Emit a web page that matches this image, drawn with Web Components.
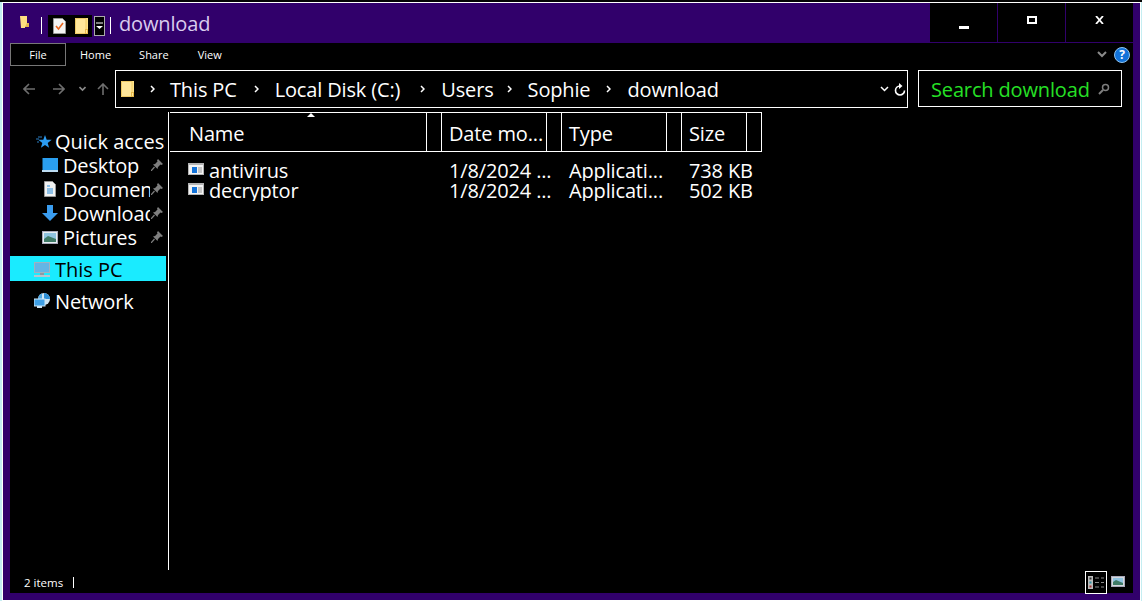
<!DOCTYPE html>
<html>
<head>
<meta charset="utf-8">
<title>download</title>
<style>
    html, body { margin: 0; height: 100%; overflow: hidden; }
    body {
        background: linear-gradient(#050505 2px, #c4eef2 2px);
        font-family: "Open Sans", "Noto Sans", sans-serif;
        letter-spacing: -0.15px;
        color: #fff;
    }
</style>
</head>
<body>
<explorer-window>
    <title-bar slot="title">download</title-bar>
    <ribbon-tabs slot="ribbon"></ribbon-tabs>
    <address-row slot="address"></address-row>
    <nav-pane slot="nav">
        <nav-item icon="star" left="26" gap="3" style="letter-spacing:0;padding-right:1px">Quick access</nav-item>
        <nav-item icon="desktop" left="32" gap="5" pin>Desktop</nav-item>
        <nav-item icon="docs" left="32" gap="5" pin>Documents</nav-item>
        <nav-item icon="down" left="32" gap="5" pin>Downloads</nav-item>
        <nav-item icon="pics" left="32" gap="5" pin>Pictures</nav-item>
        <nav-item icon="pc" left="24" gap="5" selected style="letter-spacing:0">This PC</nav-item>
        <nav-item icon="net" left="24" gap="5" style="margin-top:9px">Network</nav-item>
    </nav-pane>
    <file-list slot="files">
        <file-row date="1/8/2024 ..." type="Applicati..." size="738 KB">antivirus</file-row>
        <file-row date="1/8/2024 ..." type="Applicati..." size="502 KB">decryptor</file-row>
    </file-list>
    <status-bar slot="status">2 items</status-bar>
</explorer-window>

<script>
    // inline svg for every icon
    const ICONS = {
        folder: '<svg width="13" height="16" viewBox="0 0 13 16"><rect width="13" height="16" fill="#ffe38a"/><path d="M.5.5h10.500v15H.5z" fill="#ffe79b" stroke="#eec964"/><path d="M10 11h3v5h-3z" fill="#e8b94a"/><path d="M11 12h1v3h-1z" fill="#ffe79b"/></svg>',
        check: '<svg width="13" height="16" viewBox="0 0 13 16"><path d="M.5.5h9l3 3v12H.5z" fill="#f4f4f4" stroke="#9a9a9a"/><path d="M3 8l2.500 3L10 5" fill="none" stroke="#e8651f" stroke-width="1.600"/></svg>',
        star: '<svg width="16" height="15" viewBox="0 0 16 15"><path d="M9 1l1.700 4.700 5 .1-4 3.200 1.400 4.700L9 11l-4.100 2.700L6.300 9l-4-3.200 5-.1z" fill="#2b9cf2"/><path d="M2 3h4M0 5h3M1 8h2" stroke="#2b7cc0"/></svg>',
        desktop: '<svg width="16" height="14" viewBox="0 0 16 14"><rect x=".5" y="0" width="15.500" height="12" fill="#2a9ff0"/><rect x="0" y="12" width="16" height="2" fill="#bcdcf2"/></svg>',
        docs: '<svg width="12" height="16" viewBox="0 0 12 16"><path d="M.5.5h8l3 3v12H.5z" fill="#f2f2f2" stroke="#999"/><path d="M3 5h3M3 8h6M3 10h6M3 12h6" stroke="#2a8fdd"/></svg>',
        down: '<svg width="16" height="16" viewBox="0 0 16 16"><path d="M5 0h6v8h5l-8 8-8-8h5z" fill="#3a9df0"/></svg>',
        pics: '<svg width="16" height="13" viewBox="0 0 16 13"><rect x=".5" y=".5" width="15" height="12" fill="#e8eef2" stroke="#aab"/><rect x="2" y="2" width="12" height="9" fill="#8fc3e0"/><path d="M2 8l4-3 8 3v3H2z" fill="#3f7a66"/></svg>',
        pc: '<svg width="16" height="15" viewBox="0 0 16 15"><rect x=".5" y=".5" width="15" height="10" fill="#63b6e6" stroke="#9fb2c0"/><rect x="6" y="11" width="4" height="2" fill="#8a9aa5"/><rect x="0" y="13" width="16" height="2" fill="#b5c6d0"/></svg>',
        net: '<svg width="16" height="16" viewBox="0 0 16 16"><circle cx="10" cy="6" r="6" fill="#cfe6f5"/><path d="M10 0a6 6 0 0 1 6 6h-6z" fill="#2f8fd6"/><path d="M4 6a6 6 0 0 1 4-5.600V6z" fill="#52a8e2"/><rect x="0" y="6" width="11" height="7" fill="#3fa0e6" stroke="#cfe6f5"/><rect x="3" y="13" width="5" height="2" fill="#cfe6f5"/></svg>',
        pin: '<svg width="12" height="12" viewBox="0 0 12 12"><path d="M7 0l5 5-1.500 1-1-.5L7 8l-.5 2L2 5.500 4 5l2.500-2.500-.5-1z" fill="#7e7e7e"/><path d="M3.500 8L0 12" stroke="#7e7e7e" stroke-width="1.200"/></svg>',
        app: '<svg width="16" height="12" viewBox="0 0 16 12"><rect width="16" height="12" fill="#b4b4b4"/><rect x="1" y="2" width="14" height="9" fill="#f4f4f4"/><rect x="4" y="4" width="5" height="6" fill="#1272d8"/><path d="M10 5h4M10 7h4M10 9h4" stroke="#999"/></svg>',
        chev: '<svg width="5" height="8" viewBox="0 0 5 8"><path d="M1 1l3 3-3 3" fill="none" stroke="#fff" stroke-width="1.500"/></svg>',
    };

    class ExplorerWindow extends HTMLElement {
        constructor() {
            super();
            this.attachShadow({ mode: 'open' }).innerHTML = `
                <style>
                    :host {
                        display: flex; flex-direction: column; box-sizing: border-box;
                        width: 1139px; height: 599px; margin: 2px 0 0 2px;
                        border: 1px solid #fff; background: #31006b;
                    }
                    .body { flex: 1; margin: 0 7px 7px; background: #000; display: flex; flex-direction: column; min-height: 0; }
                    .main { flex: 1; display: flex; min-height: 0; }
                </style>
                <slot name="title"></slot>
                <div class="body">
                    <slot name="ribbon"></slot>
                    <slot name="address"></slot>
                    <div class="main">
                        <slot name="nav"></slot>
                        <slot name="files"></slot>
                    </div>
                    <slot name="status"></slot>
                </div>`;
        }
    }

    class TitleBar extends HTMLElement {
        constructor() {
            super();
            this.attachShadow({ mode: 'open' }).innerHTML = `
                <style>
                    :host { display: flex; height: 40px; padding-left: 17px; padding-right: 7px; align-items: flex-start; flex: none; }
                    .app { margin: 13px 0 0 0; width: 9px; height: 12px; }
                    .sep { width: 1px; height: 17px; background: #fff; margin-top: 14px; }
                    .quick { display: flex; gap: 9px; background: #000; height: 22px; width: 44px; box-sizing: border-box; padding: 3px 0 0 5px; margin: 12px 0 0 6px; }
                    .drop { box-sizing: border-box; width: 11px; height: 20px; margin: 13px 0 0 2px; border: 1px solid #aaa; background: #000; display: flex; align-items: center; justify-content: center; }
                    .name { margin: 6px 0 0 8px; font-size: 20px; line-height: 30px; color: #d9ccee; flex: 1; white-space: nowrap; }
                    .btns { display: flex; gap: 1px; height: 39px; background: #31006b; }
                    .btn { width: 67px; background: #000; display: flex; align-items: center; justify-content: center; }
                </style>
                <svg class="app" viewBox="0 0 9 12"><path d="M0 0h7v7h2v4H5v1H1z" fill="#ffdf80"/><path d="M7 7h2v4H5z" fill="#e3b64c"/></svg>
                <div class="sep" style="margin-left:12px"></div>
                <div class="quick">${ICONS.check}${ICONS.folder}</div>
                <div class="drop"><svg width="7" height="9" viewBox="0 0 7 9"><path d="M0 1h7" stroke="#fff"/><path d="M0 4h7L3.500 7z" fill="#fff"/></svg></div>
                <div class="sep" style="margin-left:5px"></div>
                <div class="name"><slot></slot></div>
                <div class="btns">
                    <div class="btn"><svg width="10" height="3" style="margin-top:9px"><rect width="10" height="3" fill="#fff"/></svg></div>
                    <div class="btn"><svg width="10" height="8" style="margin-top:-6px"><rect x="1" y="1" width="8" height="6" fill="none" stroke="#fff" stroke-width="2"/></svg></div>
                    <div class="btn"><svg width="9" height="8" style="margin-top:-6px" viewBox="0 0 9 8"><path d="M1 0l7 8M8 0L1 8" stroke="#fff" stroke-width="1.800"/></svg></div>
                </div>`;
        }
    }

    class RibbonTabs extends HTMLElement {
        constructor() {
            super();
            this.attachShadow({ mode: 'open' }).innerHTML = `
                <style>
                    :host { display: flex; height: 23px; align-items: stretch; font-size: 11px; flex: none; letter-spacing: 0; }
                    .tab { display: flex; align-items: center; justify-content: center; }
                    .file { width: 56px; box-sizing: border-box; border: 1px solid #777; }
                    .right { margin-left: auto; display: flex; align-items: center; gap: 7px; padding-right: 3px; }
                    .help { width: 16px; height: 16px; border-radius: 50%; background: #1272d8; border: 1px solid #8fc4ef; box-sizing: border-box; font: bold 12px "Open Sans", sans-serif; text-align: center; line-height: 14px; }
                </style>
                <div class="tab file">File</div>
                <div class="tab" style="margin-left:14px">Home</div>
                <div class="tab" style="margin-left:28px">Share</div>
                <div class="tab" style="margin-left:29px">View</div>
                <div class="right">
                    <svg width="10" height="7" viewBox="0 0 10 7"><path d="M1 1l4 4 4-4" fill="none" stroke="#8a8a8a" stroke-width="2"/></svg>
                    <div class="help">?</div>
                </div>`;
        }
    }

    class AddressRow extends HTMLElement {
        constructor() {
            super();
            // second value nudges the gap after the crumb, the widths differ a bit from the real font
            const crumbs = [['This PC', 1], ['Local Disk (C:)', 4], ['Users', -3], ['Sophie', 0], ['download', 0]];
            this.attachShadow({ mode: 'open' }).innerHTML = `
                <style>
                    :host { display: flex; height: 46px; box-sizing: border-box; padding-top: 4px; align-items: flex-start; flex: none; font-size: 20px; }
                    .arrows { width: 105px; height: 38px; display: flex; align-items: center; flex: none; }
                    .box { box-sizing: border-box; border: 1px solid #fff; height: 38px; display: flex; align-items: center; }
                    .addr { width: 793px; padding-left: 5px; flex: none; }
                    .crumb { white-space: nowrap; line-height: 36px; padding-top: 2px; }
                    .chev { margin: 0 16px; display: flex; }
                    .first { margin-right: 15px; }
                    .tail { margin-left: auto; display: flex; align-items: center; gap: 5px; padding-right: 1px; }
                    .search { width: 204px; height: 37px; margin-left: 10px; color: #26e026; padding-left: 12px; flex: none; }
                    .search span { flex: 1; white-space: nowrap; padding-top: 2px; }
                    .search svg { margin-right: 11px; }
                </style>
                <div class="arrows">
                    <svg style="margin-left:13px" width="12" height="12" viewBox="0 0 12 12"><path d="M6 1L1 6l5 5M1 6h11" fill="none" stroke="#6e6e6e" stroke-width="1.600"/></svg>
                    <svg style="margin-left:18px" width="12" height="12" viewBox="0 0 12 12"><path d="M6 1l5 5-5 5M11 6H0" fill="none" stroke="#6e6e6e" stroke-width="1.600"/></svg>
                    <svg style="margin-left:14px" width="7" height="6" viewBox="0 0 7 6"><path d="M.5 1l3 3 3-3" fill="none" stroke="#8a8a8a" stroke-width="1.600"/></svg>
                    <svg style="margin-left:11px" width="12" height="12" viewBox="0 0 12 12"><path d="M1 6l5-5 5 5M6 1v11" fill="none" stroke="#6e6e6e" stroke-width="1.600"/></svg>
                </div>
                <div class="box addr">
                    ${ICONS.folder}
                    <span class="chev first">${ICONS.chev}</span>
                    ${crumbs.map(c => `<span class="crumb" style="margin-right:${c[1]}px">${c[0]}</span>`).join(`<span class="chev">${ICONS.chev}</span>`)}
                    <div class="tail">
                        <svg width="9" height="6" viewBox="0 0 9 6"><path d="M1 1l3.500 3.500L8 1" fill="none" stroke="#fff" stroke-width="1.500"/></svg>
                        <svg width="12" height="13" viewBox="0 0 12 13"><path d="M10.500 7.500A4.500 4.500 0 1 1 6 3" fill="none" stroke="#fff" stroke-width="1.600"/><path d="M5 0v6l3.500-3z" fill="#fff"/></svg>
                    </div>
                </div>
                <div class="box search">
                    <span>Search download</span>
                    <svg width="12" height="12" viewBox="0 0 12 12"><circle cx="7.500" cy="4.500" r="3" fill="none" stroke="#7e7e7e" stroke-width="1.500"/><path d="M5 7l-4 4" stroke="#7e7e7e" stroke-width="2"/></svg>
                </div>`;
        }
    }

    class NavPane extends HTMLElement {
        constructor() {
            super();
            this.attachShadow({ mode: 'open' }).innerHTML = `
                <style>
                    :host { display: flex; flex-direction: column; box-sizing: content-box; width: 158px; padding-top: 18px; border-right: 1px solid #fff; margin-right: 1px; flex: none; }
                </style>
                <slot></slot>`;
        }
    }

    class NavItem extends HTMLElement {
        connectedCallback() {
            const root = this.shadowRoot || this.attachShadow({ mode: 'open' });
            const left = this.getAttribute('left');
            const gap = this.getAttribute('gap');
            const pin = this.hasAttribute('pin');
            root.innerHTML = `
                <style>
                    :host { display: flex; align-items: center; height: 24px; width: 156px; font-size: 20px; box-sizing: border-box; padding-left: ${left}px; padding-bottom: 2px; }
                    :host([selected]) { background: #1aebff; color: #000; height: 25px; margin-top: 6px; padding: 1px 0 0 ${left}px; }
                    .ic { display: flex; flex: none; width: 16px; justify-content: center; }
                    .label { margin-left: ${gap}px; overflow: hidden; white-space: nowrap; flex: 1; min-width: 0; }
                    .pin { display: flex; flex: none; margin-left: 1px; margin-right: 3px; }
                </style>
                <span class="ic">${ICONS[this.getAttribute('icon')]}</span>
                <span class="label"><slot></slot></span>
                ${pin ? `<span class="pin">${ICONS.pin}</span>` : ''}`;
        }
    }

    class FileList extends HTMLElement {
        constructor() {
            super();
            const cols = [['Name', 257], ['', 15], ['Date mo...', 105], ['', 15], ['Type', 105], ['', 15], ['Size', 65], ['', 15]];
            this.attachShadow({ mode: 'open' }).innerHTML = `
                <style>
                    :host { display: block; flex: 1; position: relative; font-size: 20px; }
                    .head { display: flex; width: 592px; height: 40px; box-sizing: border-box; border-top: 1px solid #fff; border-bottom: 1px solid #fff; }
                    .cell { box-sizing: border-box; border-right: 1px solid #fff; padding-left: 7px; line-height: 42px; white-space: nowrap; overflow: hidden; flex: none; }
                    .cell:first-child { padding-left: 19px; }
                    .sort { position: absolute; left: 137px; top: 1px; width: 0; height: 0; border: 4px solid transparent; border-top: 0; border-bottom-color: #fff; }
                    .rows { padding-top: 9px; }
                </style>
                <div class="head">${cols.map(c => `<div class="cell" style="width:${c[1]}px">${c[0]}</div>`).join('')}</div>
                <div class="sort"></div>
                <div class="rows"><slot></slot></div>`;
        }
    }

    class FileRow extends HTMLElement {
        connectedCallback() {
            const root = this.shadowRoot || this.attachShadow({ mode: 'open' });
            root.innerHTML = `
                <style>
                    :host { display: flex; height: 20px; line-height: 20px; overflow: hidden; align-items: flex-start; }
                    .ic { display: flex; margin: 2px 0 0 18px; width: 21px; flex: none; }
                    .name { width: 240px; flex: none; white-space: nowrap; }
                    .date { width: 120px; flex: none; white-space: nowrap; }
                    .type { width: 120px; flex: none; white-space: nowrap; }
                    .size { width: 63px; flex: none; text-align: right; white-space: nowrap; }
                </style>
                <span class="ic">${ICONS.app}</span>
                <span class="name"><slot></slot></span>
                <span class="date">${this.getAttribute('date')}</span>
                <span class="type">${this.getAttribute('type')}</span>
                <span class="size">${this.getAttribute('size')}</span>`;
        }
    }

    class StatusBar extends HTMLElement {
        constructor() {
            super();
            this.attachShadow({ mode: 'open' }).innerHTML = `
                <style>
                    :host { display: flex; height: 23px; align-items: center; font-size: 11.500px; padding-left: 14px; flex: none; letter-spacing: 0; }
                    .sep { width: 1px; height: 11px; background: #fff; margin-left: 10px; margin-top: 2px; }
                    .text { margin-top: 2px; }
                    .views { margin-left: auto; display: flex; align-items: flex-start; height: 23px; margin-right: 8px; }
                    .on { box-sizing: border-box; width: 22px; height: 23px; margin-top: 1px; border: 1px solid #fff; display: flex; align-items: center; justify-content: center; }
                    .large { margin: 6px 0 0 4px; }
                </style>
                <span class="text"><slot></slot></span>
                <div class="sep"></div>
                <div class="views">
                    <div class="on"><svg width="16" height="13" viewBox="0 0 16 13"><rect x="0" y="0" width="5" height="13" fill="#bbb"/><rect x="1.500" y="1.500" width="2" height="2" fill="#333"/><rect x="1.500" y="5.500" width="2" height="2" fill="#2a8fa0"/><rect x="1.500" y="9.500" width="2" height="2" fill="#a03030"/><path d="M7 2h4M13 2h3M7 6.500h4M13 6.500h3M7 11h4M13 11h3" stroke="#8a8a8a"/></svg></div>
                    <svg class="large" width="14" height="11" viewBox="0 0 14 11"><rect x=".5" y=".5" width="13" height="10" fill="#d4d8dc" stroke="#aab"/><rect x="2" y="2" width="10" height="7" fill="#8fc3e0"/><path d="M2 6l3-2 7 3v2H2z" fill="#3f7a66"/></svg>
                </div>`;
        }
    }

    customElements.define('explorer-window', ExplorerWindow);
    customElements.define('title-bar', TitleBar);
    customElements.define('ribbon-tabs', RibbonTabs);
    customElements.define('address-row', AddressRow);
    customElements.define('nav-pane', NavPane);
    customElements.define('nav-item', NavItem);
    customElements.define('file-list', FileList);
    customElements.define('file-row', FileRow);
    customElements.define('status-bar', StatusBar);
</script>
</body>
</html>
